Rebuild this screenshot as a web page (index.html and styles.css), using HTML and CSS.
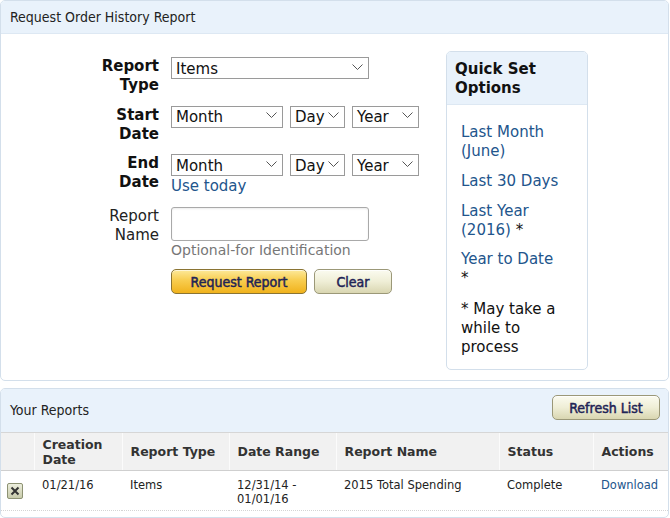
FILE: index.html
```html
<!DOCTYPE html>
<html>
<head>
<meta charset="utf-8">
<link rel="stylesheet" href="styles.css">
</head>
<body>
<div class="page">
  <section class="panel panel-request">
    <div class="panel-head">Request Order History Report</div>
    <div class="request-body">
      <div class="form">
        <div class="label strong">Report<br>Type</div>
        <div class="control">
          <div class="select sel-wide"><span>Items</span><svg width="11" height="6" viewBox="0 0 11 6"><path d="M0.5 0.5 L5.5 5.5 L10.5 0.5" fill="none" stroke="#555" stroke-width="1"/></svg></div>
        </div>

        <div class="label strong">Start<br>Date</div>
        <div class="control">
          <div class="date-row">
            <div class="select sel-month"><span>Month</span><svg width="11" height="6" viewBox="0 0 11 6"><path d="M0.5 0.5 L5.5 5.5 L10.5 0.5" fill="none" stroke="#555" stroke-width="1"/></svg></div>
            <div class="select sel-day"><span>Day</span><svg width="11" height="6" viewBox="0 0 11 6"><path d="M0.5 0.5 L5.5 5.5 L10.5 0.5" fill="none" stroke="#555" stroke-width="1"/></svg></div>
            <div class="select sel-year"><span>Year</span><svg width="11" height="6" viewBox="0 0 11 6"><path d="M0.5 0.5 L5.5 5.5 L10.5 0.5" fill="none" stroke="#555" stroke-width="1"/></svg></div>
          </div>
        </div>

        <div class="label strong">End<br>Date</div>
        <div class="control">
          <div class="date-row">
            <div class="select sel-month"><span>Month</span><svg width="11" height="6" viewBox="0 0 11 6"><path d="M0.5 0.5 L5.5 5.5 L10.5 0.5" fill="none" stroke="#555" stroke-width="1"/></svg></div>
            <div class="select sel-day"><span>Day</span><svg width="11" height="6" viewBox="0 0 11 6"><path d="M0.5 0.5 L5.5 5.5 L10.5 0.5" fill="none" stroke="#555" stroke-width="1"/></svg></div>
            <div class="select sel-year"><span>Year</span><svg width="11" height="6" viewBox="0 0 11 6"><path d="M0.5 0.5 L5.5 5.5 L10.5 0.5" fill="none" stroke="#555" stroke-width="1"/></svg></div>
          </div>
          <a class="link use-today" href="#">Use today</a>
        </div>

        <div class="label">Report<br>Name</div>
        <div class="control">
          <div class="text-input"></div>
          <div class="hint">Optional-for Identification</div>
        </div>

        <div class="label"></div>
        <div class="control buttons">
          <button class="btn btn-gold">Request Report</button>
          <button class="btn btn-cream btn-clear">Clear</button>
        </div>
      </div>

      <aside class="quick">
        <div class="quick-head">Quick Set Options</div>
        <div class="quick-body">
          <div class="quick-item"><a class="link" href="#">Last Month (June)</a></div>
          <div class="quick-item"><a class="link" href="#">Last 30 Days</a></div>
          <div class="quick-item"><a class="link" href="#"><span>Last Year</span><br><span>(2016)</span></a> <span class="star">*</span></div>
          <div class="quick-item"><a class="link" href="#">Year to Date</a> <span class="star">*</span></div>
          <div class="quick-note">* May take a while to process</div>
        </div>
      </aside>
    </div>
  </section>

  <section class="panel panel-reports">
    <div class="panel-head reports-head">
      <span>Your Reports</span>
      <button class="btn btn-cream btn-refresh">Refresh List</button>
    </div>
    <table class="reports">
      <colgroup>
        <col style="width:33px"><col style="width:88px"><col style="width:107px"><col style="width:107px"><col style="width:163px"><col style="width:94px"><col style="width:75px">
      </colgroup>
      <thead>
        <tr>
          <th></th>
          <th>Creation<br>Date</th>
          <th>Report Type</th>
          <th>Date Range</th>
          <th>Report Name</th>
          <th>Status</th>
          <th>Actions</th>
        </tr>
      </thead>
      <tbody>
        <tr>
          <td class="cell-x"><span class="xbox"><svg width="10" height="10" viewBox="0 0 10 10"><path d="M1.5 1.5 L8.5 8.5 M8.5 1.5 L1.5 8.5" stroke="#333" stroke-width="2" fill="none"/></svg></span></td>
          <td>01/21/16</td>
          <td>Items</td>
          <td>12/31/14 -<br>01/01/16</td>
          <td>2015 Total Spending</td>
          <td>Complete</td>
          <td><a class="link" href="#">Download</a></td>
        </tr>
      </tbody>
    </table>
  </section>
</div>
</body>
</html>
```

FILE: styles.css
```css
* { box-sizing: border-box; }
body {
  margin: 0;
  background: #fff;
  font-family: "DejaVu Sans", Verdana, sans-serif;
  color: #111;
}
.page { width: 669px; }

.panel {
  border: 1px solid #d3dfeb;
  border-radius: 5px;
  background: #fff;
  overflow: hidden;
}
.panel-head {
  height: 33px;
  background: #e9f2fb;
  border-bottom: 1px solid #dde8f3;
  font-family: "DejaVu Sans Condensed", "DejaVu Sans", sans-serif;
  font-size: 14px;
  color: #222;
  padding: 0 9px;
  display: flex;
  align-items: center;
}

.request-body {
  display: flex;
  padding: 17px 0 10px 0;
}
.form {
  flex: 0 0 445px;
  display: grid;
  grid-template-columns: 158px 1fr;
  column-gap: 12px;
  row-gap: 10.5px;
  align-content: start;
  margin-top: 6px;
}
.label {
  text-align: right;
  font-size: 15px;
  line-height: 19px;
  color: #222;
}
.label.strong { font-weight: bold; color: #111; }
.control { display: flex; flex-direction: column; align-items: flex-start; }

.select {
  height: 22px;
  border: 1px solid #9a9a9a;
  background: #fff;
  display: flex;
  align-items: center;
  justify-content: space-between;
  padding: 0 5px 0 4px;
  font-size: 15px;
  color: #111;
}
.select span { margin-top: 1px; }
.select svg { flex: none; margin-top: -3px; }
.sel-wide { width: 198px; }
.sel-month { width: 112px; }
.sel-day { width: 55px; }
.sel-year { width: 67px; }
.date-row { display: flex; gap: 7px; }

.link { color: #22558c; text-decoration: none; }
.use-today {
  font-size: 15px;
  line-height: 19px;
  margin-top: 1px;
}

.text-input {
  width: 198px;
  height: 34px;
  border: 1px solid #a9a9a9;
  border-radius: 3px;
  box-shadow: inset 0 1px 2px rgba(0,0,0,0.08);
}
.hint {
  font-size: 14px;
  line-height: 17px;
  color: #777;
  margin-top: 1px;
}
.buttons {
  flex-direction: row;
  gap: 7px;
}

.btn {
  height: 25px;
  border-radius: 5px;
  font-family: "DejaVu Sans Condensed", "DejaVu Sans", sans-serif;
  font-size: 14px;
  color: #1f2456;
  padding: 0;
  -webkit-text-stroke: 0.5px #1f2456;
  cursor: pointer;
}
.btn-gold {
  width: 136px;
  border: 1px solid #8a7433;
  background: linear-gradient(#fde99a 0%, #f8cd4f 45%, #f0b21c 100%);
  box-shadow: inset 0 1px 0 rgba(255,255,255,0.6);
}
.btn-cream {
  border: 1px solid #9b9878;
  background: linear-gradient(#fbfbf0 0%, #efeed6 50%, #d9d6b1 100%);
  box-shadow: inset 0 1px 0 rgba(255,255,255,0.8);
}
.btn-clear { width: 78px; }
.btn-refresh { width: 108px; }

.quick {
  flex: 0 0 142px;
  border: 1px solid #d3dfeb;
  border-radius: 5px;
  overflow: hidden;
  align-self: flex-start;
}
.quick-head {
  background: #e9f2fb;
  border-bottom: 1px solid #dde8f3;
  font-weight: bold;
  font-size: 15px;
  line-height: 19px;
  padding: 8px 8px 6px 8px;
  color: #111;
}
.quick-body {
  padding: 18px 25px 12px 14px;
  font-size: 15px;
  line-height: 19px;
  color: #111;
}
.quick-item { margin-bottom: 11px; }
.quick-item:nth-child(3) { margin-bottom: 10px; }
.quick-item:nth-child(4) { margin-bottom: 12px; }

.panel-reports { margin-top: 7px; }
.reports-head {
  height: 43px;
  border-bottom: none;
  justify-content: space-between;
  padding: 0 8px 0 9px;
  align-items: flex-start;
}
.reports-head span { margin-top: 13px; }
.reports-head .btn { margin-top: 6px; }

.reports {
  width: 667px;
  border-collapse: collapse;
  table-layout: fixed;
  margin-bottom: 6px;
}
.reports th {
  background: #f1f1f1;
  border-top: 1px solid #d6d6d6;
  border-bottom: 1px solid #cfcfcf;
  border-left: 1px solid #fbfbfb;
  height: 38px;
  text-align: left;
  font-size: 12.5px;
  line-height: 15px;
  font-weight: bold;
  color: #333;
  padding: 0 8px;
  vertical-align: middle;
}
.reports th:first-child { border-left: none; }
.reports td {
  font-size: 11.5px;
  line-height: 14px;
  color: #222;
  padding: 7px 8px 4px 8px;
  vertical-align: top;
  border-bottom: 1px dotted #d4d4d4;
  height: 39px;
}
.reports td.cell-x { padding: 12px 0 0 6px; }
.xbox {
  display: flex;
  align-items: center;
  justify-content: center;
  width: 16px;
  height: 16px;
  border: 1px solid #8d9273;
  border-radius: 2px;
  background: linear-gradient(#eceedd, #c8cbab);
}
```
